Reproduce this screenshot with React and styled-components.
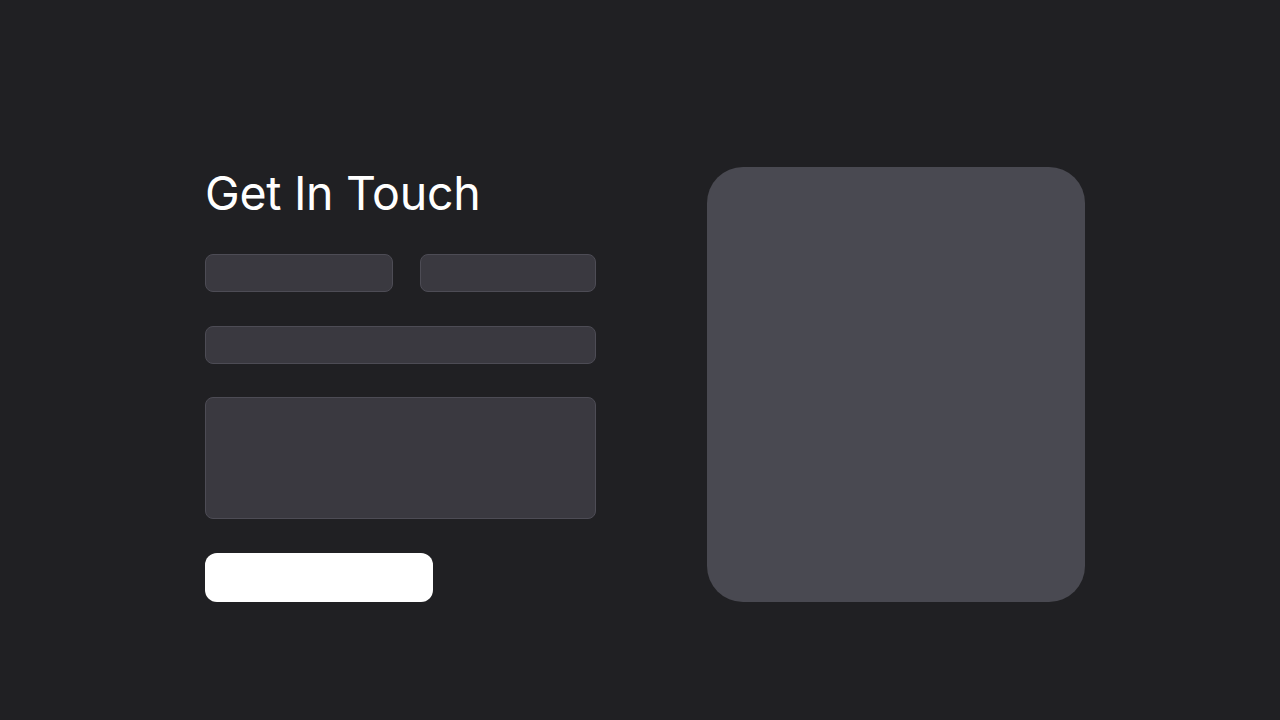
import React from 'react'
import styled, { createGlobalStyle } from 'styled-components'

const GlobalStyle = createGlobalStyle`
  html, body {
    margin: 0;
    padding: 0;
    background-color: #202023;
  }
  body {
    font-family: Inter, "Open Sans", sans-serif;
  }
`

const Page = styled.div`
  width: 1280px;
  height: 720px;
  box-sizing: border-box;
  padding: 167px 0 0 205px;
  display: flex;
  align-items: flex-start;
  gap: 111px;
`

const Form = styled.form`
  width: 391px;
  display: flex;
  flex-direction: column;
`

const Title = styled.h1`
  margin: 0 0 35px;
  font-family: Inter, sans-serif;
  font-weight: 400;
  font-size: 46.5px;
  line-height: 52px;
  letter-spacing: -0.3px;
  color: #ffffff;
`

const Row = styled.div`
  display: flex;
  gap: 27px;
  margin-bottom: ${props => props.space || '34px'};
`

const Field = styled.input`
  box-sizing: border-box;
  display: block;
  width: ${props => props.width || '100%'};
  height: 38px;
  padding: 0 12px;
  border: 1.5px solid #4d4c55;
  border-radius: 8px;
  background-color: #3a3940;
  color: #ffffff;
  font: inherit;
  outline: none;
`

const Message = styled.textarea`
  box-sizing: border-box;
  display: block;
  width: 100%;
  height: 122px;
  margin-bottom: 34px;
  padding: 10px 12px;
  border: 1.5px solid #4d4c55;
  border-radius: 8px;
  background-color: #3a3940;
  color: #ffffff;
  font: inherit;
  resize: none;
  outline: none;
`

const Submit = styled.button`
  width: 228px;
  height: 49px;
  border: none;
  border-radius: 12px;
  background-color: #ffffff;
  cursor: pointer;
`

const Card = styled.div`
  width: 378px;
  height: 435px;
  border-radius: 36px;
  background-color: #494951;
`

const App = () => (
  <>
    <GlobalStyle />
    <Page>
      <Form onSubmit={e => e.preventDefault()}>
        <Title>Get In Touch</Title>
        <Row>
          <Field width="188px" />
          <Field width="176px" />
        </Row>
        <Row space="33px">
          <Field />
        </Row>
        <Message />
        <Submit type="submit" />
      </Form>
      <Card />
    </Page>
  </>
)

export default App
